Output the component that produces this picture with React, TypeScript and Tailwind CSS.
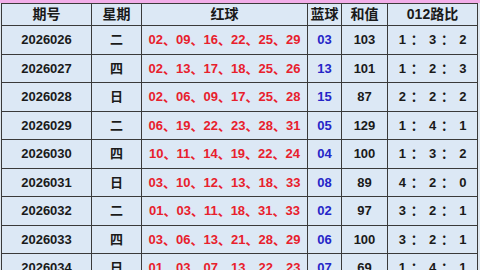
const rows = [
  ["2026026", "二", "02、09、16、22、25、29", "03", "103", ["1", "3", "2"]],
  ["2026027", "四", "02、13、17、18、25、26", "13", "101", ["1", "2", "3"]],
  ["2026028", "日", "02、06、09、17、25、28", "15", "87", ["2", "2", "2"]],
  ["2026029", "二", "06、19、22、23、28、31", "05", "129", ["1", "4", "1"]],
  ["2026030", "四", "10、11、14、19、22、24", "04", "100", ["1", "3", "2"]],
  ["2026031", "日", "03、10、12、13、18、33", "08", "89", ["4", "2", "0"]],
  ["2026032", "二", "01、03、11、18、31、33", "02", "97", ["3", "2", "1"]],
  ["2026033", "四", "03、06、13、21、28、29", "06", "100", ["3", "2", "1"]],
  ["2026034", "日", "01、03、07、13、22、23", "07", "69", ["1", "4", "1"]],
] as const

const cell = "border border-[#3a3a3a] text-center p-0"

export default function App() {
  return (
    <div
      className="h-[270px] w-[480px] overflow-hidden bg-[#dfe7ef] text-[13px] font-bold text-[#1a1a1a]"
      style={{ fontFamily: '"Liberation Sans", Arial, "Noto Sans CJK SC", sans-serif' }}
    >
      <div className="h-[3px] bg-[#f2aee9]" />
      <table className="ml-[1px] w-[477px] table-fixed border-collapse bg-[#dce8f5]">
        <colgroup>
          <col className="w-[90px]" />
          <col className="w-[50px]" />
          <col className="w-[166px]" />
          <col className="w-[34px]" />
          <col className="w-[46px]" />
          <col className="w-[90px]" />
        </colgroup>
        <thead>
          <tr className="h-[21px] text-[14px]">
            <th className={cell}>期号</th>
            <th className={cell}>星期</th>
            <th className={cell}>红球</th>
            <th className={cell}>蓝球</th>
            <th className={cell}>和值</th>
            <th className={cell}>012路比</th>
          </tr>
        </thead>
        <tbody>
          {rows.map(([no, day, red, blue, sum, ratio]) => (
            <tr key={no} className="h-[28.5px]">
              <td className={cell}>{no}</td>
              <td className={cell}>{day}</td>
              <td className={`${cell} text-[#e8202c]`}>{red}</td>
              <td className={`${cell} text-[#2525c8]`}>{blue}</td>
              <td className={cell}>{sum}</td>
              <td className={cell}>
                <span className="inline-flex items-center gap-[5px]">
                  <span>{ratio[0]}</span>
                  <span>：</span>
                  <span>{ratio[1]}</span>
                  <span>：</span>
                  <span>{ratio[2]}</span>
                </span>
              </td>
            </tr>
          ))}
        </tbody>
      </table>
    </div>
  )
}
